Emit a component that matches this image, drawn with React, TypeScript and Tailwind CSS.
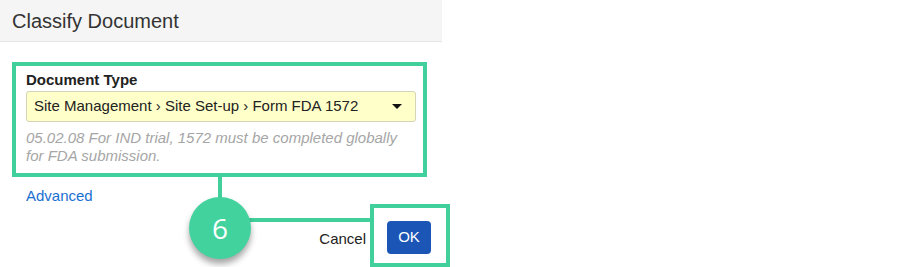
import React from "react";

export default function App() {
  return (
    <div
      className="relative w-[900px] h-[267px] bg-white overflow-hidden"
      style={{ fontFamily: '"Liberation Sans", Arial, sans-serif' }}
    >
      <div className="w-[442px]">
        <div className="h-[42px] bg-[#f5f5f5] border-b border-[#e6e6e6] pl-[12px] flex items-center text-[20px] text-[#333333]">
          Classify Document
        </div>
        <div className="pt-[20px] pl-[12px]">
          <div className="w-[415px] h-[115px] border-4 border-[#41d09c] pl-[10px] pt-[5px]">
            <div className="text-[15px] leading-[18px] font-bold text-[#222222]">Document Type</div>
            <div className="mt-[2px] w-[390px] h-[31px] bg-[#ffffc9] border border-[#d4d4b8] rounded-[3px] flex items-center justify-between pl-[7px] pr-[13px] text-[15px] text-[#222222]">
              <span>Site Management › Site Set-up › Form FDA 1572</span>
              <svg width="10" height="5" viewBox="0 0 10 5">
                <path d="M0 0 H10 L5 5 Z" fill="#111111" />
              </svg>
            </div>
            <div className="mt-[7px] text-[15px] leading-[18px] italic text-[#a6a6a6]">
              05.02.08 For IND trial, 1572 must be completed globally
              <br />
              for FDA submission.
            </div>
          </div>
          <div className="mt-[10px] pl-[14px] text-[15px] leading-[18px] text-[#1a6fd1]">Advanced</div>
          <div className="mt-[16px] pr-[11px] flex justify-end items-center gap-[21px]">
            <span className="pt-[3px] text-[15px] text-[#222222]">Cancel</span>
            <div className="w-[44px] h-[33px] rounded-[4px] bg-[#1b55b6] text-white text-[15px] flex items-center justify-center">
              OK
            </div>
          </div>
        </div>
      </div>

      {/* annotation overlays */}
      <div className="absolute left-[218px] top-[177px] w-[4px] h-[24px] bg-[#41d09c]" />
      <div className="absolute left-[245px] top-[218px] w-[127px] h-[4px] bg-[#41d09c]" />
      <div className="absolute left-[370px] top-[204px] w-[80px] h-[63px] border-[4px] border-[#41d09c]" />
      <div
        className="absolute left-[189px] top-[197px] w-[62px] h-[62px] rounded-full bg-[#41d29d] shadow-[0_5px_6px_rgba(0,0,0,0.35)] flex items-center justify-center text-white text-[28px] font-normal"
        style={{ fontFamily: '"Open Sans", sans-serif' }}
      >
        6
      </div>
    </div>
  );
}
